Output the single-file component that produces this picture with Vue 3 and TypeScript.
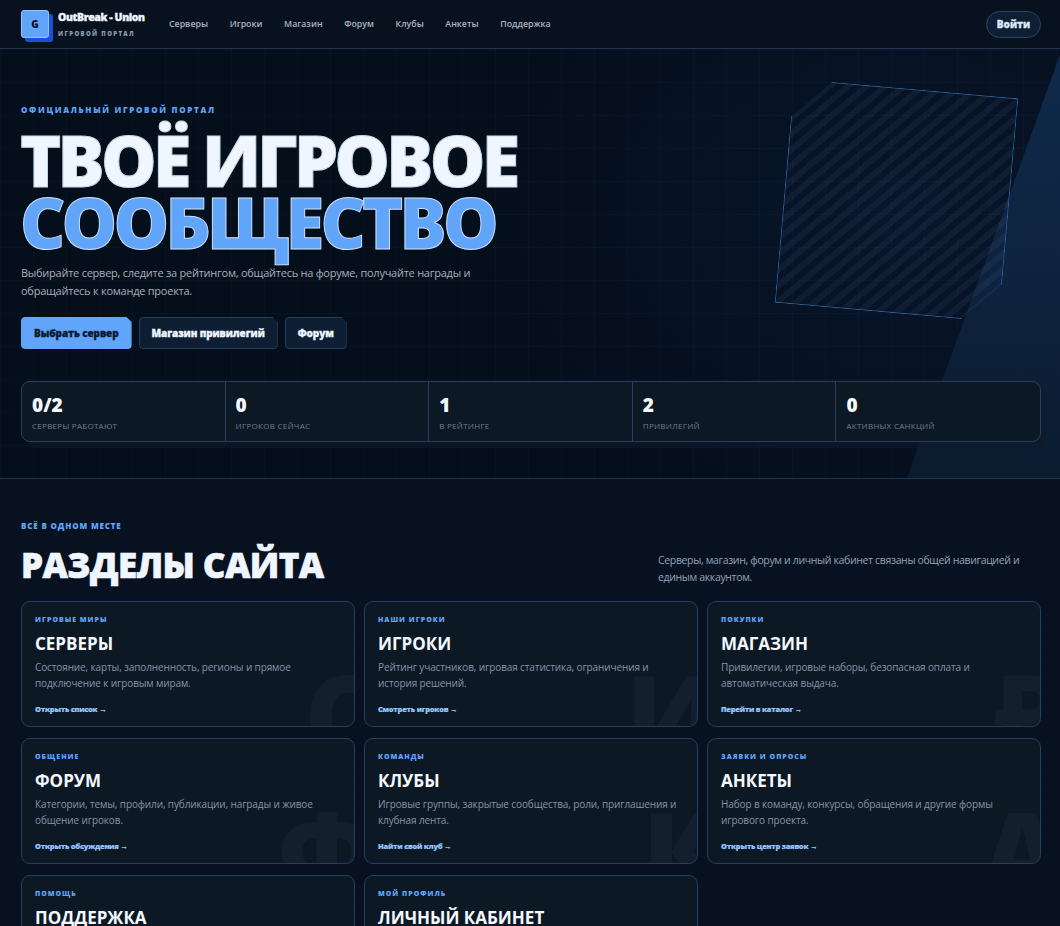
<script setup lang="ts">
interface Stat {
  value: string
  label: string
}

interface Section {
  kicker: string
  title: string
  desc: string
  link: string
  mark: string
}

const navItems = ['Серверы', 'Игроки', 'Магазин', 'Форум', 'Клубы', 'Анкеты', 'Поддержка']

const stats: Stat[] = [
  { value: '0/2', label: 'Серверы работают' },
  { value: '0', label: 'Игроков сейчас' },
  { value: '1', label: 'В рейтинге' },
  { value: '2', label: 'Привилегий' },
  { value: '0', label: 'Активных санкций' },
]

const sections: Section[] = [
  { kicker: 'Игровые миры', title: 'Серверы', desc: 'Состояние, карты, заполненность, регионы и прямое подключение к игровым мирам.', link: 'Открыть список →', mark: 'С' },
  { kicker: 'Наши игроки', title: 'Игроки', desc: 'Рейтинг участников, игровая статистика, ограничения и история решений.', link: 'Смотреть игроков →', mark: 'И' },
  { kicker: 'Покупки', title: 'Магазин', desc: 'Привилегии, игровые наборы, безопасная оплата и автоматическая выдача.', link: 'Перейти в каталог →', mark: '₽' },
  { kicker: 'Общение', title: 'Форум', desc: 'Категории, темы, профили, публикации, награды и живое общение игроков.', link: 'Открыть обсуждения →', mark: 'Ф' },
  { kicker: 'Команды', title: 'Клубы', desc: 'Игровые группы, закрытые сообщества, роли, приглашения и клубная лента.', link: 'Найти свой клуб →', mark: 'К' },
  { kicker: 'Заявки и опросы', title: 'Анкеты', desc: 'Набор в команду, конкурсы, обращения и другие формы игрового проекта.', link: 'Открыть центр заявок →', mark: 'А' },
  { kicker: 'Помощь', title: 'Поддержка', desc: 'Обращения, ответы команды проекта и помощь по любым вопросам.', link: 'Написать нам →', mark: 'П' },
  { kicker: 'Мой профиль', title: 'Личный кабинет', desc: 'Аккаунт, покупки, настройки профиля и привязка игровых данных.', link: 'Войти в кабинет →', mark: 'Л' },
]
</script>

<template>
  <div class="page">
    <header class="topbar">
      <a class="brand">
        <span class="logo">G</span>
        <span class="brand-text">
          <strong>OutBreak - Union</strong>
          <small>Игровой портал</small>
        </span>
      </a>
      <nav class="nav">
        <a v-for="item in navItems" :key="item">{{ item }}</a>
      </nav>
      <button class="login">Войти</button>
    </header>

    <section class="hero">
      <div class="hero-slant"></div>
      <div class="hero-square"></div>
      <div class="hero-inner">
        <p class="eyebrow">Официальный игровой портал</p>
        <h1>Твоё игровое<br /><span>сообщество</span></h1>
        <p class="lead">Выбирайте сервер, следите за рейтингом, общайтесь на форуме, получайте награды и обращайтесь к команде проекта.</p>
        <div class="actions">
          <a class="btn primary">Выбрать сервер</a>
          <a class="btn">Магазин привилегий</a>
          <a class="btn">Форум</a>
        </div>
        <div class="stats">
          <div v-for="s in stats" :key="s.label" class="stat">
            <b>{{ s.value }}</b>
            <span>{{ s.label }}</span>
          </div>
        </div>
      </div>
    </section>

    <section class="sections">
      <div class="sections-head">
        <div>
          <p class="kicker">Всё в одном месте</p>
          <h2>Разделы сайта</h2>
        </div>
        <p class="sections-note">Серверы, магазин, форум и личный кабинет связаны общей навигацией и единым аккаунтом.</p>
      </div>
      <div class="grid">
        <article v-for="c in sections" :key="c.title" class="card">
          <span class="mark">{{ c.mark }}</span>
          <p class="card-kicker">{{ c.kicker }}</p>
          <h3>{{ c.title }}</h3>
          <p class="card-desc">{{ c.desc }}</p>
          <a class="card-link">{{ c.link }}</a>
        </article>
      </div>
    </section>
  </div>
</template>

<style>
html, body { background: #07111f; overflow: hidden; }
</style>

<style scoped>
* { box-sizing: border-box; }
.page {
  height: 926px; overflow: hidden; color: #f1f7ff;
  font-family: "Open Sans", "Noto Sans", sans-serif;
  background-color: #07111f;
}
p, h1, h2, h3 { margin: 0; }

.topbar {
  height: 49px; display: flex; align-items: center; padding: 0 19px 0 21px;
  background: #08121f; border-bottom: 1px solid #22354f;
}
.brand { display: flex; align-items: center; gap: 9px; width: 148px; }
.logo {
  flex: none; width: 28px; height: 28px; display: grid; place-items: center; border-radius: 3px;
  background: #60a5fa; border: 1px solid #93c5fd; box-shadow: 4px 4px 0 #1d4ed8;
  color: #07111f; font-size: 10px; font-weight: 800;
}
.brand-text { display: flex; flex-direction: column; gap: 6px; }
.brand-text strong { font-size: 10.5px; line-height: 13px; font-weight: 800; letter-spacing: -.4px; white-space: nowrap; color: #f1f7ff; -webkit-text-stroke: .3px #f1f7ff; }
.brand-text small { font-size: 6px; line-height: 8px; font-weight: 800; letter-spacing: 1.35px; white-space: nowrap; text-transform: uppercase; color: #8b9bb0; }
.nav { display: flex; gap: 21.6px; }
.nav a { font-size: 8.8px; font-weight: 600; color: #a9b3c2; }
.login {
  margin-left: auto; width: 55px; height: 27px; border-radius: 14px; padding: 0;
  border: 1px solid #2b4566; background: #0e1f33; color: #dbeafe;
  font: 800 10px "Open Sans", sans-serif; -webkit-text-stroke: .3px #dbeafe;
}

.hero {
  position: relative; height: 430px; overflow: hidden;
  border-bottom: 1px solid #22354f;
  background-color: #050e1b;
  background-image:
    linear-gradient(rgba(96, 165, 250, .03) 1px, transparent 1px),
    linear-gradient(90deg, rgba(96, 165, 250, .03) 1px, transparent 1px),
    radial-gradient(420px 320px at 85% 38%, rgba(30, 80, 160, .12), transparent);
  background-size: 33px 33px, 33px 33px, auto;
}
.hero-slant {
  position: absolute; right: 0; bottom: 0; width: 153px; height: 423px;
  background: linear-gradient(180deg, #102a4c, #0b1c30);
  clip-path: polygon(100% 0, 100% 100%, 0 100%);
}
.hero-square {
  position: absolute; left: 784px; top: 39px; width: 225px; height: 225px;
  border: 1px solid #2f5f95; transform: rotate(5deg);
  clip-path: polygon(17% 0, 100% 0, 100% 83%, 83% 100%, 0 100%, 0 17%);
  background: repeating-linear-gradient(135deg, rgba(120, 165, 230, .07) 0 6px, transparent 6px 12px);
}
.hero-inner { position: relative; padding: 56px 19px 0 21px; }
.eyebrow { font-size: 8px; line-height: 10px; font-weight: 800; letter-spacing: 1.7px; text-transform: uppercase; color: #60a5fa; }
h1 {
  margin: 14px 0 0 -1px; font-size: 70px; line-height: 62px; font-weight: 800;
  letter-spacing: -3.8px; text-transform: uppercase; color: #eff6ff;
  -webkit-text-stroke: 1px #c9d6e6;
}
h1 span { color: #60a5fa; -webkit-text-stroke: 1px #c9dffa; }
.lead { margin-top: 11px; width: 470px; font-size: 11px; line-height: 18px; letter-spacing: -.25px; color: #a8b0ba; }
.actions { display: flex; gap: 7px; margin-top: 17px; }
.btn {
  height: 32px; display: flex; align-items: center; padding: 0 12px; border-radius: 4px;
  border: 1px solid #24405f; background: #0f1f33; color: #eff6ff;
  font-size: 10px; font-weight: 800; letter-spacing: -.1px; -webkit-text-stroke: .3px currentColor;
  clip-path: polygon(0 0, calc(100% - 5px) 0, 100% 5px, 100% 100%, 0 100%);
}
.btn.primary { background: #60a5fa; border-color: #60a5fa; color: #0a1a30; }
.stats {
  display: grid; grid-template-columns: repeat(5, 1fr); margin-top: 32px; height: 61px;
  border: 1px solid #2a3f5c; border-radius: 9px; background: #0d1825;
  box-shadow: 6px 6px 0 rgba(14, 26, 42, .55);
}
.stat { padding: 12px 10px 0; border-right: 1px solid #2a3f5c; display: flex; flex-direction: column; gap: 5px; }
.stat:last-child { border-right: 0; }
.stat b { font-size: 19px; line-height: 22px; font-weight: 800; color: #f5f8fc; }
.stat span { font-size: 8px; line-height: 10px; letter-spacing: .28px; text-transform: uppercase; color: #6e7f94; }

.sections {
  padding: 42px 19px 0 21px; height: 447px;
  background-color: #07111f;
  background-image: radial-gradient(rgba(148, 180, 220, .035) 1px, transparent 1px);
  background-size: 16px 16px;
}
.sections-head { display: flex; justify-content: space-between; }
.kicker { font-size: 8px; line-height: 10px; font-weight: 800; letter-spacing: .85px; text-transform: uppercase; color: #60a5fa; }
h2 { margin-top: 13px; font-size: 35px; line-height: 42px; font-weight: 800; letter-spacing: -.6px; text-transform: uppercase; color: #eff6ff; -webkit-text-stroke: .6px #eff6ff; }
.sections-note { width: 383px; margin-top: 31px; font-size: 10.5px; line-height: 17px; letter-spacing: -.35px; color: #93a3b8; }
.grid { display: grid; grid-template-columns: repeat(3, 1fr); gap: 11px 9px; margin-top: 15px; }
.card {
  position: relative; overflow: hidden; height: 126px; padding: 13px 13px 0;
  border: 1px solid #23405f; border-radius: 9px; background: #0d1825;
}
.mark {
  position: absolute; right: -22px; bottom: -41px; font-size: 110px; line-height: 110px;
  font-weight: 800; color: rgba(148, 170, 200, .055);
}
.card-kicker { position: relative; font-size: 7px; line-height: 9px; font-weight: 800; letter-spacing: 1px; text-transform: uppercase; color: #60a5fa; }
h3 { position: relative; margin-top: 8px; font-size: 17px; line-height: 24px; font-weight: 700; text-transform: uppercase; color: #f5f8fc; }
.card-desc { position: relative; margin-top: 3px; font-size: 10px; line-height: 16px; letter-spacing: -.12px; color: #8595a8; }
.card-link { position: relative; display: block; margin-top: 12px; font-size: 7.5px; line-height: 12px; font-weight: 800; letter-spacing: -.25px; color: #93c5fd; -webkit-text-stroke: .2px currentColor; }
</style>
